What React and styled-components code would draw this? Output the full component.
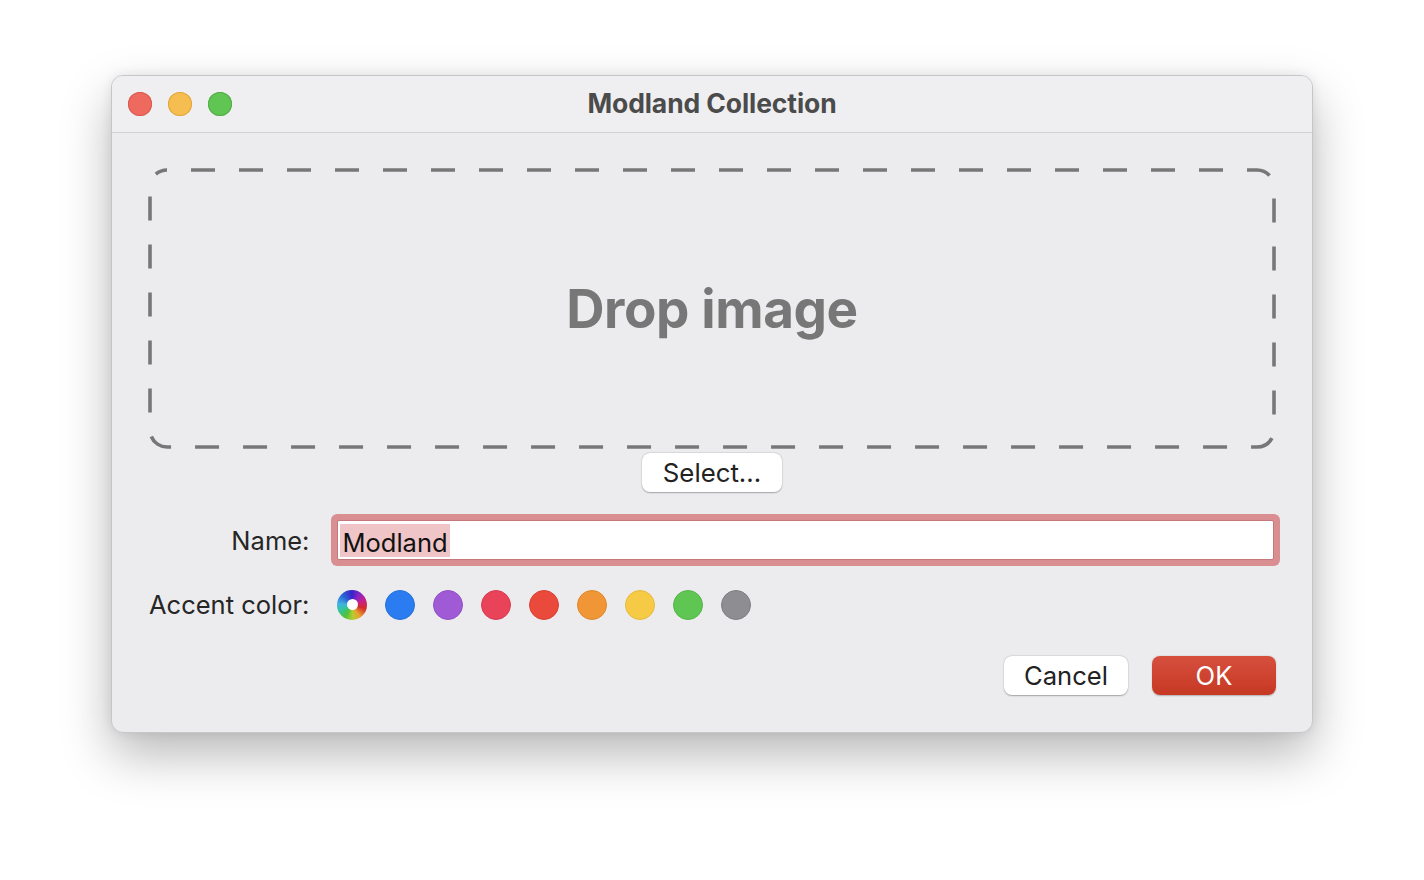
import React from 'react'
import styled, { createGlobalStyle } from 'styled-components'

const Global = createGlobalStyle`
  html, body {
    margin: 0;
    padding: 0;
    background: #ffffff;
  }
  body {
    font-family: Inter, "Liberation Sans", sans-serif;
    -webkit-font-smoothing: antialiased;
  }
`

const Page = styled.div`
  width: 1424px;
  height: 880px;
  padding-top: 75px;
  box-sizing: border-box;
`

const Window = styled.div`
  width: 1202px;
  margin: 0 auto;
  background: #ececee;
  border: 1px solid #c6c6c8;
  border-radius: 12px;
  overflow: hidden;
  box-shadow: 0 22px 50px rgba(0, 0, 0, 0.28), 0 0 12px rgba(0, 0, 0, 0.08);
  box-sizing: border-box;
`

const TitleBar = styled.div`
  height: 57px;
  display: grid;
  grid-template-columns: 1fr auto 1fr;
  align-items: center;
  background: #efeff1;
  border-bottom: 1px solid #d3d3d5;
  box-sizing: border-box;
  padding: 0 16px;
`

const Lights = styled.div`
  display: flex;
  gap: 16px;
`

const Light = styled.span`
  width: 24px;
  height: 24px;
  border-radius: 50%;
  background: ${p => p.$c};
  box-shadow: inset 0 0 0 1px ${p => p.$b};
`

const Title = styled.div`
  font-size: 26.5px;
  font-weight: 700;
  color: #4b4b4b;
  letter-spacing: -0.1px;
  margin-top: -2px;
`

const Content = styled.div`
  padding: 35px 36px 37px 36px;
  display: flex;
  flex-direction: column;
`

const DropZone = styled.div`
  position: relative;
  height: 281px;
  display: flex;
  align-items: center;
  justify-content: center;
`

const DashFrame = styled.svg`
  position: absolute;
  inset: 0;
  pointer-events: none;
`

const DropText = styled.div`
  font-size: 53px;
  font-weight: 700;
  color: #777777;
  letter-spacing: -0.4px;
  margin-top: 1px;
`

const SelectButton = styled.button`
  align-self: center;
  margin-top: 4px;
  width: 140px;
  height: 39px;
  border: none;
  border-radius: 8px;
  background: #ffffff;
  box-shadow: 0 0.5px 1.5px rgba(0, 0, 0, 0.3), 0 0 0 0.5px rgba(0, 0, 0, 0.04);
  font-family: Inter, "Liberation Sans", sans-serif;
  font-size: 25.8px;
  color: #222222;
  padding: 0;
`

const Form = styled.div`
  margin-top: 28px;
  display: grid;
  grid-template-columns: auto 1fr;
  column-gap: 28px;
  row-gap: 29px;
  align-items: center;
`

const Label = styled.div`
  text-align: right;
  font-size: 25.5px;
  color: #262626;
  padding-left: 1px;
`

const Field = styled.div`
  height: 40px;
  margin-right: 2px;
  background: #ffffff;
  border: 1px solid #c5777c;
  box-shadow: 0 0 0 6px #d98e92;
  border-radius: 2px;
  display: flex;
  align-items: center;
  padding-left: 2px;
  box-sizing: border-box;
`

const Selected = styled.span`
  background: #efc5c7;
  color: #111111;
  font-size: 25.5px;
  line-height: 33px;
  height: 33px;
  padding: 2px 2px 0 2px;
  box-sizing: border-box;
`

const Swatches = styled.div`
  display: flex;
  gap: 18px;
  height: 30px;
`

const Swatch = styled.span`
  width: 30px;
  height: 30px;
  border-radius: 50%;
  box-sizing: border-box;
  background: ${p => p.$c};
  border: 1px solid ${p => p.$b};
`

const WheelSwatch = styled.span`
  width: 30px;
  height: 30px;
  border-radius: 50%;
  display: flex;
  align-items: center;
  justify-content: center;
  background: conic-gradient(
    #3a22c9 0deg,
    #8a24c4 35deg,
    #c8208a 70deg,
    #d42a2a 105deg,
    #e8a030 145deg,
    #b8cc30 175deg,
    #4ec23a 210deg,
    #32c4a8 250deg,
    #42b2e2 275deg,
    #2a66d6 315deg,
    #3a22c9 360deg
  );

  &::after {
    content: '';
    width: 11px;
    height: 11px;
    border-radius: 50%;
    background: #ffffff;
  }
`

const Actions = styled.div`
  margin-top: 36px;
  display: flex;
  justify-content: flex-end;
  gap: 24px;
`

const DialogButton = styled.button`
  width: 124px;
  height: 39px;
  border: none;
  border-radius: 8px;
  padding: 0;
  font-family: Inter, "Liberation Sans", sans-serif;
  font-size: 25.6px;
  color: ${p => (p.$primary ? '#ffffff' : '#222222')};
  background: ${p => (p.$primary ? 'linear-gradient(#d6503e, #c63823)' : '#ffffff')};
  box-shadow: ${p =>
    p.$primary
      ? '0 0.5px 1.5px rgba(0, 0, 0, 0.25)'
      : '0 0.5px 1.5px rgba(0, 0, 0, 0.3), 0 0 0 0.5px rgba(0, 0, 0, 0.04)'};
`

const swatches = [
  ['#2b7cf1', '#2670dc'],
  ['#a05ad6', '#9250c6'],
  ['#e9435a', '#d73a50'],
  ['#ea4a3b', '#d84235'],
  ['#f19636', '#dd872c'],
  ['#f7ca45', '#e6b93c'],
  ['#5fc653', '#53b548'],
  ['#8e8d92', '#7e7d82'],
]

export default function App() {
  return (
    <Page>
      <Global />
      <Window>
        <TitleBar>
          <Lights>
            <Light $c="#ee6a5f" $b="#d85a50" />
            <Light $c="#f6be50" $b="#dfa73e" />
            <Light $c="#61c554" $b="#52ad46" />
          </Lights>
          <Title>Modland Collection</Title>
          <div />
        </TitleBar>
        <Content>
          <DropZone>
            <DashFrame width="1128" height="281" viewBox="0 0 1128 281">
              <rect
                x="2"
                y="2"
                width="1124"
                height="277"
                rx="17"
                ry="17"
                fill="none"
                stroke="#777777"
                strokeWidth="3.6"
                strokeDasharray="24 24"
                strokeDashoffset="24"
              />
            </DashFrame>
            <DropText>Drop image</DropText>
          </DropZone>
          <SelectButton>Select...</SelectButton>
          <Form>
            <Label>Name:</Label>
            <Field>
              <Selected>Modland</Selected>
            </Field>
            <Label>Accent color:</Label>
            <Swatches>
              <WheelSwatch />
              {swatches.map(([c, b]) => (
                <Swatch key={c} $c={c} $b={b} />
              ))}
            </Swatches>
          </Form>
          <Actions>
            <DialogButton>Cancel</DialogButton>
            <DialogButton $primary>OK</DialogButton>
          </Actions>
        </Content>
      </Window>
    </Page>
  )
}
